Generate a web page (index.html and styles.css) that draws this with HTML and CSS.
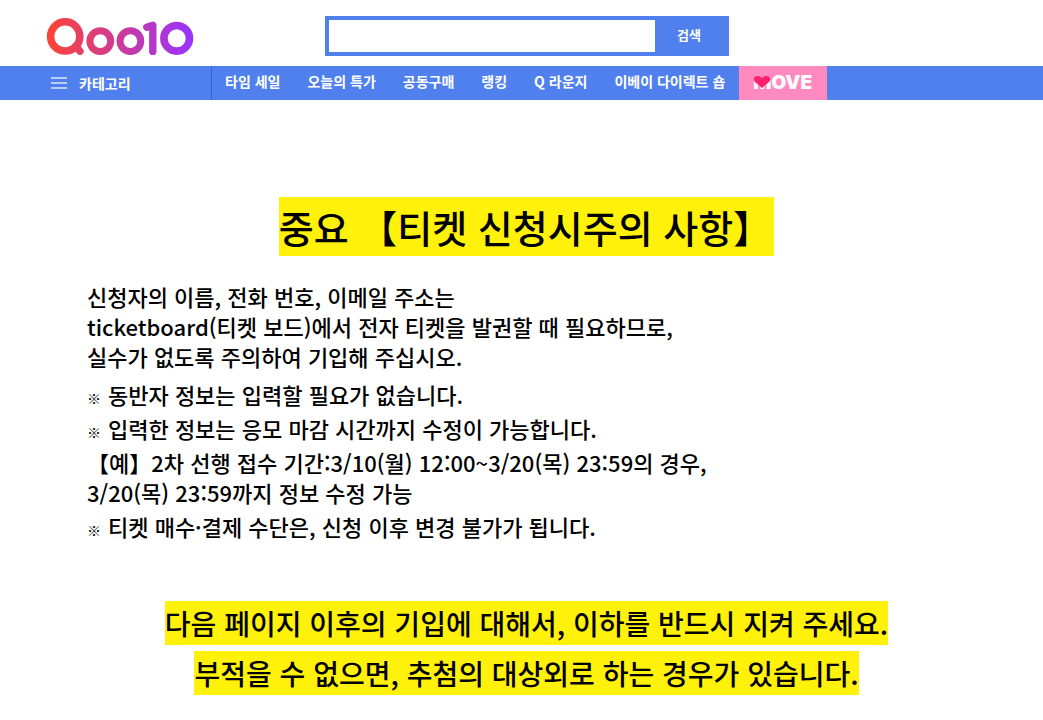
FILE: index.html
```html
<!DOCTYPE html>
<html lang="ko">
<head>
    <meta charset="UTF-8">
    <meta name="viewport" content="width=device-width, initial-scale=1.0">
    <title>Qoo10</title>
    <link rel="stylesheet" href="styles.css">
</head>
<body>

    <header>
        <div class="header-top">
            <a class="logo" href="#" aria-label="Qoo10">
                <svg width="148" height="40" viewBox="46 16 148 40" fill="none" stroke="url(#logo-color)" stroke-linecap="round" stroke-linejoin="round">
                    <defs>
                        <linearGradient id="logo-color" gradientUnits="userSpaceOnUse" x1="47" y1="0" x2="193" y2="0">
                            <stop offset="0" stop-color="#ff4433"/>
                            <stop offset="0.5" stop-color="#cb3b9b"/>
                            <stop offset="1" stop-color="#9833ff"/>
                        </linearGradient>
                    </defs>
                    <circle cx="65.2" cy="36.4" r="14.6" stroke-width="7.6"/>
                    <path d="M76 46L80 51.2" stroke-width="7.4"/>
                    <circle cx="100.3" cy="41.1" r="10.4" stroke-width="7"/>
                    <circle cx="130.4" cy="41.1" r="10.4" stroke-width="7"/>
                    <path d="M146.8 27.2L152.8 25.4V51.4" stroke-width="7.4"/>
                    <circle cx="176.7" cy="38.3" r="12.8" stroke-width="7.6"/>
                </svg>
            </a>
            <form class="search">
                <input type="text" class="search-input" name="keyword" aria-label="검색어">
                <button type="submit" class="search-button">검색</button>
            </form>
        </div>

        <nav class="menu">
            <button type="button" class="category">
                <svg width="16" height="12" viewBox="0 0 16 12"><path d="M0 1h16M0 6h16M0 11h16" stroke="#b9cdf9" stroke-width="2"/></svg>
                카테고리
            </button>
            <a href="#">타임 세일</a>
            <a href="#">오늘의 특가</a>
            <a href="#">공동구매</a>
            <a href="#">랭킹</a>
            <a href="#">Q 라운지</a>
            <a href="#">이베이 다이렉트 숍</a>
            <a class="move" href="#">
                <span class="move-text">MOVE</span>
                <svg class="heart" width="18" height="15" viewBox="0 0 18 15">
                    <path d="M0 0H18V6H0Z" fill="#ff8abf"/>
                    <path d="M9 14L1.4 7.4C0 4 1.6 2 4.6 2C6.6 2 8.4 3 9 4.6C9.6 3 11.4 2 13.4 2C16.4 2 18 4 16.6 7.4Z" fill="#ff1f70"/>
                </svg>
            </a>
        </nav>
    </header>

    <main>
        <h1><mark>중요 【티켓 신청시주의 사항】</mark></h1>

        <div class="guide">
            <p>신청자의 이름, 전화 번호, 이메일 주소는<br>
            ticketboard(티켓 보드)에서 전자 티켓을 발권할 때 필요하므로,<br>
            실수가 없도록 주의하여 기입해 주십시오.</p>

            <ul>
                <li><span class="sign">※</span>동반자 정보는 입력할 필요가 없습니다.</li>
                <li><span class="sign">※</span>입력한 정보는 응모 마감 시간까지 수정이 가능합니다.</li>
                <li>【예】2차 선행 접수 기간:3/10(월) 12:00~3/20(목) 23:59의 경우,<br>
                3/20(목) 23:59까지 정보 수정 가능</li>
                <li><span class="sign">※</span>티켓 매수·결제 수단은, 신청 이후 변경 불가가 됩니다.</li>
            </ul>
        </div>

        <p class="notice">
            <mark>다음 페이지 이후의 기입에 대해서, 이하를 반드시 지켜 주세요.</mark><br>
            <mark>부적을 수 없으면, 추첨의 대상외로 하는 경우가 있습니다.</mark>
        </p>
    </main>

</body>
</html>
```
FILE: styles.css
```css
* {
    box-sizing: border-box;
}
body {
    font-family: "Noto Sans CJK KR", sans-serif;
    font-weight: 500;
    background-color: #ffffff;
    color: #000;
    margin: 0;
}
a {
    color: inherit;
    text-decoration: none;
}
.header-top {
    display: flex;
    align-items: center;
    gap: 131px;
    padding: 16px 46px 10px;
}
.logo svg {
    display: block;
}
.search {
    display: flex;
    width: 404px;
    height: 40px;
    background-color: #5080ee;
}
.search-input {
    flex: 1;
    min-width: 0;
    border: 4px solid #5080ee;
    border-right: none;
    padding: 0 10px;
    font-size: 16px;
    background-color: #ffffff;
}
.search-button {
    width: 74px;
    padding: 0 6px 4px 0;
    border: none;
    background-color: #5080ee;
    color: #ffffff;
    font-family: inherit;
    font-size: 13px;
    font-weight: bold;
    text-align: center;
    cursor: pointer;
}
.menu {
    display: flex;
    height: 34px;
    background-color: #5080ee;
    color: #ffffff;
    font-size: 14px;
    font-weight: bold;
    line-height: 30px;
    white-space: nowrap;
}
.menu a {
    padding: 0 14px 0 13px;
}
.category {
    display: flex;
    align-items: center;
    gap: 12px;
    width: 212px;
    padding: 0 0 0 51px;
    border: none;
    border-right: 1px solid #3560e0;
    background: none;
    color: #ffffff;
    font: inherit;
    line-height: 34px;
    cursor: pointer;
}
.menu .move {
    position: relative;
    width: 88px;
    padding-left: 14px;
    background-color: #ff8abf;
}
.move-text {
    font-family: Inter, sans-serif;
    font-size: 19px;
    font-weight: 900;
    line-height: 34px;
}
.heart {
    position: absolute;
    left: 14px;
    top: 8px;
}
main {
    padding: 97px 0 24px 10px;
}
mark {
    background-color: #fff109;
    color: #000;
}
h1 {
    margin: 0;
    font-size: 38px;
    font-weight: 500;
    line-height: 60px;
    text-align: center;
}
h1 mark {
    padding: 2px 3px 2px 0;
}
.guide {
    margin-top: 24px;
    padding-left: 77px;
    font-size: 22px;
    line-height: 30px;
}
.guide p {
    margin: 0 0 8px;
}
.guide ul {
    list-style: none;
    margin: 0;
    padding: 0;
}
.guide li {
    margin-bottom: 4px;
}
.sign {
    margin-right: 7px;
    font-size: 14px;
    line-height: 14px;
}
.notice {
    margin: 57px 0 0;
    font-size: 28px;
    line-height: 50px;
    text-align: center;
}
.notice mark {
    padding: 2px 0;
}
```
